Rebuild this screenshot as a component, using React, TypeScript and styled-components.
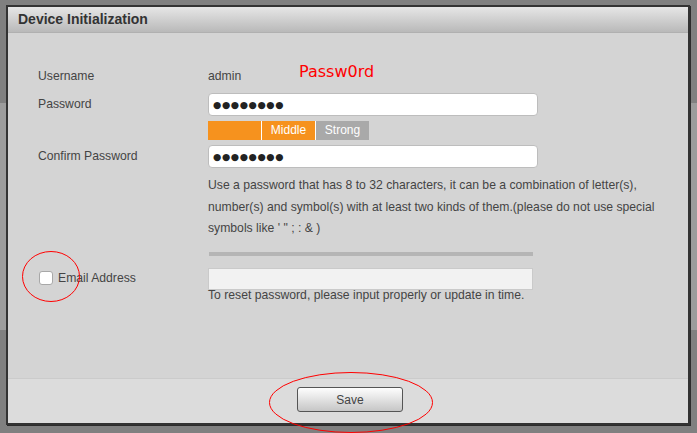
import React from "react";
import styled, { createGlobalStyle } from "styled-components";

const Global = createGlobalStyle`
  html, body { margin: 0; padding: 0; }
  body { font-family: "Liberation Sans", Arial, sans-serif; }
  * { box-sizing: border-box; }
`;

const Page = styled.div`
  position: relative;
  width: 697px;
  height: 433px;
  overflow: hidden;
  padding: 5px 0 0 6px;
  background: linear-gradient(
    to bottom,
    #808080 0 103px,
    #9c9c9c 103px 330px,
    #808080 330px
  );
`;

const Dialog = styled.div`
  width: 684px;
  height: 420px;
  border: 2px solid #333;
  box-shadow: 1px 1px 0 #2c2c2c;
  display: flex;
  flex-direction: column;
  background: #d4d4d4;
`;

const TitleBar = styled.div`
  height: 26px;
  flex: none;
  display: flex;
  align-items: center;
  padding: 0 0 2px 10px;
  background: linear-gradient(to bottom, #e6e6e6, #b9b9b9);
  border-bottom: 1px solid #b0b0b0;
  font-size: 14px;
  font-weight: bold;
  color: #333;
`;

const Body = styled.div`
  flex: 1;
  padding: 33px 0 0 30px;
  display: flex;
  flex-direction: column;
  font-size: 12.2px;
  color: #444;
`;

const Row = styled.div<{ $mt?: number }>`
  display: flex;
  align-items: flex-start;
  margin-top: ${(p) => p.$mt ?? 0}px;
`;

const Label = styled.div<{ $lh?: number; $pt?: number }>`
  width: 170px;
  flex: none;
  line-height: ${(p) => p.$lh ?? 18}px;
  padding-top: ${(p) => p.$pt ?? 0}px;
  display: flex;
  align-items: center;
  gap: 5px;
`;

const Field = styled.div`
  display: flex;
  flex-direction: column;
  align-items: flex-start;
`;

const Value = styled.div`
  line-height: 20px;
`;

const TextInput = styled.div`
  width: 330px;
  height: 23px;
  background: #fff;
  border: 1px solid #bdbdbd;
  border-radius: 4px;
  display: flex;
  align-items: center;
  padding-left: 4px;
  font-family: "DejaVu Sans", sans-serif;
  font-size: 9.5px;
  letter-spacing: 0.6px;
  color: #222;
`;

const Strength = styled.div`
  margin-top: 5px;
  display: flex;
  gap: 1px;
  background: #fff;
  height: 19px;
`;

const Seg = styled.div<{ $on: boolean }>`
  width: 53px;
  height: 19px;
  background: ${(p) => (p.$on ? "#f6921e" : "#a9a9a9")};
  color: #fff;
  font-size: 12px;
  line-height: 19px;
  text-align: center;
`;

const Hint = styled.div`
  margin-top: 7px;
  width: 460px;
  line-height: 21.5px;
  color: #444;
`;

const Divider = styled.div`
  margin: 12px 0 0 171px;
  width: 324px;
  height: 4px;
  background: #b5b5b5;
`;

const Check = styled.span`
  display: inline-block;
  width: 14px;
  height: 14px;
  margin-left: 1px;
  background: #fff;
  border: 1px solid #a8a8a8;
  border-radius: 3px;
`;

const EmailInput = styled.div`
  width: 325px;
  height: 22px;
  background: #f2f2f2;
  border: 1px solid #cacaca;
`;

const Note = styled.div`
  line-height: 11px;
  color: #444;
`;

const Footer = styled.div`
  height: 45px;
  flex: none;
  background: #dcdcdc;
  border-top: 1px solid #cbcbcb;
  display: flex;
  justify-content: center;
  padding: 8px 0 0 4px;
`;

const Button = styled.button`
  width: 106px;
  height: 25px;
  border: 1px solid #555;
  border-radius: 3px;
  background: linear-gradient(to bottom, #fefefe, #c6c6c6);
  font-family: "Liberation Sans", Arial, sans-serif;
  font-size: 12px;
  color: #444;
  padding: 0;
`;

const Annot = styled.div<{ $x: number; $y: number }>`
  position: absolute;
  left: ${(p) => p.$x}px;
  top: ${(p) => p.$y}px;
  pointer-events: none;
`;

const RedText = styled.span`
  font-family: "DejaVu Sans", sans-serif;
  font-size: 16px;
  color: #ff0000;
  line-height: 20px;
`;

const Ellipse = ({ w, h }: { w: number; h: number }) => (
  <svg width={w} height={h} viewBox={`0 0 ${w} ${h}`}>
    <ellipse
      cx={w / 2}
      cy={h / 2}
      rx={w / 2 - 0.5}
      ry={h / 2 - 0.5}
      fill="none"
      stroke="#ff0000"
      strokeWidth="1"
    />
  </svg>
);

export default function App() {
  return (
    <>
      <Global />
      <Page>
        <Dialog>
          <TitleBar>Device Initialization</TitleBar>
          <Body>
            <Row>
              <Label $lh={20}>Username</Label>
              <Value>admin</Value>
            </Row>
            <Row $mt={7}>
              <Label $pt={2}>Password</Label>
              <Field>
                <TextInput>●●●●●●●●</TextInput>
                <Strength>
                  <Seg $on />
                  <Seg $on>Middle</Seg>
                  <Seg $on={false}>Strong</Seg>
                </Strength>
              </Field>
            </Row>
            <Row $mt={5}>
              <Label $pt={2}>Confirm Password</Label>
              <Field>
                <TextInput>●●●●●●●●</TextInput>
                <Hint>
                  Use a password that has 8 to 32 characters, it can be a combination of letter(s),
                  number(s) and symbol(s) with at least two kinds of them.(please do not use special
                  symbols like ' " ; : &amp; )
                </Hint>
              </Field>
            </Row>
            <Divider />
            <Row $mt={12}>
              <Label $pt={1}>
                <Check />
                Email Address
              </Label>
              <Field>
                <EmailInput />
                <Note>To reset password, please input properly or update in time.</Note>
              </Field>
            </Row>
          </Body>
          <Footer>
            <Button>Save</Button>
          </Footer>
        </Dialog>
        <Annot $x={299} $y={62}>
          <RedText>Passw0rd</RedText>
        </Annot>
        <Annot $x={22} $y={251}>
          <Ellipse w={58} h={51} />
        </Annot>
        <Annot $x={269} $y={372}>
          <Ellipse w={164} h={61} />
        </Annot>
      </Page>
    </>
  );
}
